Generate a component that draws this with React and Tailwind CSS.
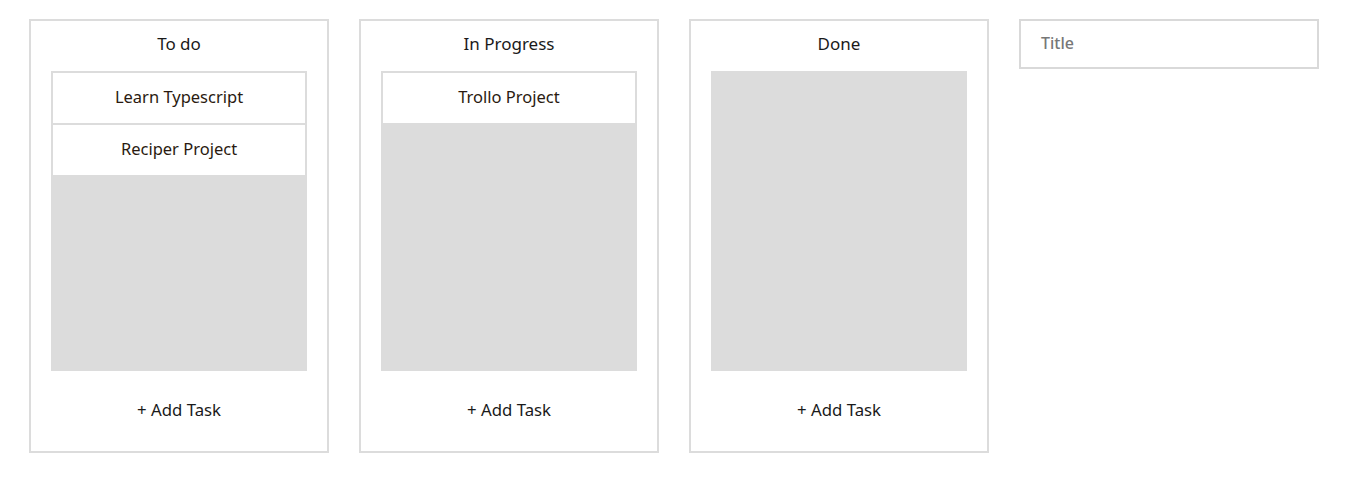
import React from "react";

const columns = [
  { title: "To do", tasks: ["Learn Typescript", "Reciper Project"] },
  { title: "In Progress", tasks: ["Trollo Project"] },
  { title: "Done", tasks: [] },
];

export default function App() {
  return (
    <div
      className="flex items-start gap-[30px] pl-[29px] pt-[19px] bg-white min-h-[483px]"
      style={{ fontFamily: '"Noto Sans", "Open Sans", sans-serif' }}
    >
      {columns.map((col) => (
        <div
          key={col.title}
          className="w-[300px] h-[434px] border-2 border-[#dcdcdc] flex flex-col items-center"
        >
          <div className="h-[50px] w-full flex items-center justify-center text-[17px] text-[#1a1a1a] pb-[5px]">
            {col.title}
          </div>
          <div className="w-[256px] h-[300px] bg-[#dcdcdc] px-[2px] pt-[2px] flex flex-col gap-[2px]">
            {col.tasks.map((t) => (
              <div
                key={t}
                className="h-[50px] bg-white flex items-center justify-center text-[16.5px] text-[#2a1a10] pb-[2px]"
              >
                {t}
              </div>
            ))}
          </div>
          <div className="flex-1 w-full flex items-center justify-center text-[16.8px] text-[#1a1a1a] pb-[3px]">
            + Add Task
          </div>
        </div>
      ))}
      <div className="w-[300px] h-[50px] border-2 border-[#d9d9d9] flex items-center pl-[20px] pb-[3px]">
        <span className="text-[16px] font-medium text-[#777]">Title</span>
      </div>
    </div>
  );
}
